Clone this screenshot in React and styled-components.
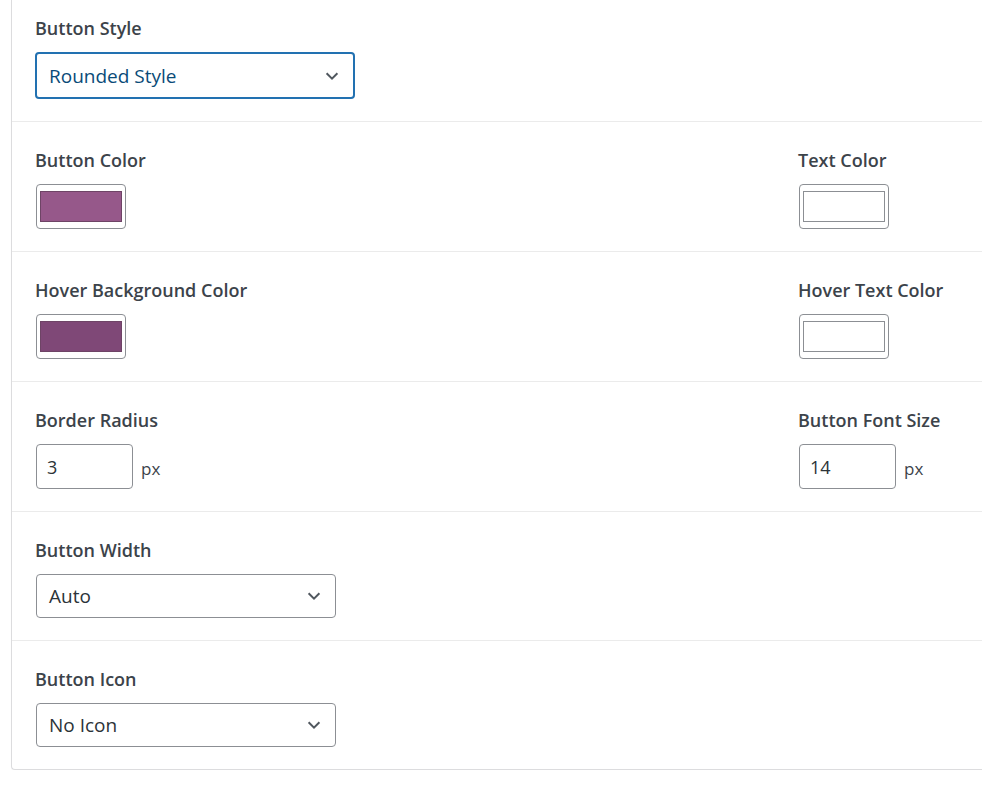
import React from 'react';
import styled, { createGlobalStyle } from 'styled-components';

const Global = createGlobalStyle`
  body { margin: 0; background: #fff; font-family: "Open Sans", "Noto Sans", sans-serif; color: #3c434a; }
`;

const Panel = styled.div`
  margin-left: 11px;
  width: 1000px;
  border-left: 1px solid #dcdcde;
  border-bottom: 1px solid #dcdcde;
  border-bottom-left-radius: 4px;
  box-shadow: 0 1px 1px rgba(0,0,0,0.04);
`;

const Row = styled.div`
  display: grid;
  grid-template-columns: 763px 1fr;
  padding: ${p => (p.first ? '16px' : '26px')} 0 22px 23px;
  border-top: ${p => (p.first ? 'none' : '1px solid #ebebeb')};
`;

const Field = styled.div`
  display: flex;
  flex-direction: column;
  align-items: flex-start;
`;

const Label = styled.div`
  font-size: 18px;
  font-weight: 600;
  line-height: 24px;
  margin-bottom: 12px;
  color: #3c434a;
  white-space: nowrap;
`;

const Select = styled.div`
  box-sizing: border-box;
  width: ${p => (p.focus ? '320px' : '300px')};
  height: ${p => (p.focus ? '47px' : '44px')};
  margin-left: ${p => (p.focus ? '0' : '1px')};
  border: ${p => (p.focus ? '2px solid #2271b1' : '1px solid #8c8f94')};
  border-radius: 4px;
  display: flex;
  align-items: center;
  justify-content: space-between;
  padding: 0 12px 0 ${p => (p.focus ? '12px' : '12px')};
  font-size: 19px;
  color: ${p => (p.focus ? '#0a4b78' : '#2c3338')};
`;

const Swatch = styled.div`
  box-sizing: border-box;
  width: 90px;
  height: 45px;
  margin-left: 1px;
  border: 1px solid #8c8f94;
  border-radius: 4px;
  padding: 6px 3px;
  & > div {
    width: 100%;
    height: 100%;
    background: ${p => p.color};
    border: 1px solid ${p => (p.color === '#ffffff' ? '#8c8f94' : '#6e4466')};
    box-sizing: border-box;
  }
`;

const NumberWrap = styled.div`
  display: flex;
  align-items: center;
  gap: 8px;
  margin-left: 1px;
`;

const NumberInput = styled.div`
  box-sizing: border-box;
  width: 97px;
  height: 45px;
  border: 1px solid #8c8f94;
  border-radius: 4px;
  display: flex;
  align-items: center;
  padding-left: 10px;
  font-size: 18px;
  color: #2c3338;
`;

const Unit = styled.span`
  font-size: 17px;
  margin-top: 4px;
`;

const Chevron = () => (
  <svg width="18" height="18" viewBox="0 0 20 20" fill="none" stroke="#50575e" strokeWidth="2.2">
    <path d="M4 7l6 6 6-6" />
  </svg>
);

export default function App() {
  return (
    <>
      <Global />
      <Panel>
        <Row first>
          <Field>
            <Label>Button Style</Label>
            <Select focus>Rounded Style<Chevron /></Select>
          </Field>
        </Row>
        <Row>
          <Field><Label>Button Color</Label><Swatch color="#96588a"><div /></Swatch></Field>
          <Field><Label>Text Color</Label><Swatch color="#ffffff"><div /></Swatch></Field>
        </Row>
        <Row>
          <Field><Label>Hover Background Color</Label><Swatch color="#7f4877"><div /></Swatch></Field>
          <Field><Label>Hover Text Color</Label><Swatch color="#ffffff"><div /></Swatch></Field>
        </Row>
        <Row>
          <Field>
            <Label>Border Radius</Label>
            <NumberWrap><NumberInput>3</NumberInput><Unit>px</Unit></NumberWrap>
          </Field>
          <Field>
            <Label>Button Font Size</Label>
            <NumberWrap><NumberInput>14</NumberInput><Unit>px</Unit></NumberWrap>
          </Field>
        </Row>
        <Row>
          <Field><Label>Button Width</Label><Select>Auto<Chevron /></Select></Field>
        </Row>
        <Row>
          <Field><Label>Button Icon</Label><Select>No Icon<Chevron /></Select></Field>
        </Row>
      </Panel>
    </>
  );
}
